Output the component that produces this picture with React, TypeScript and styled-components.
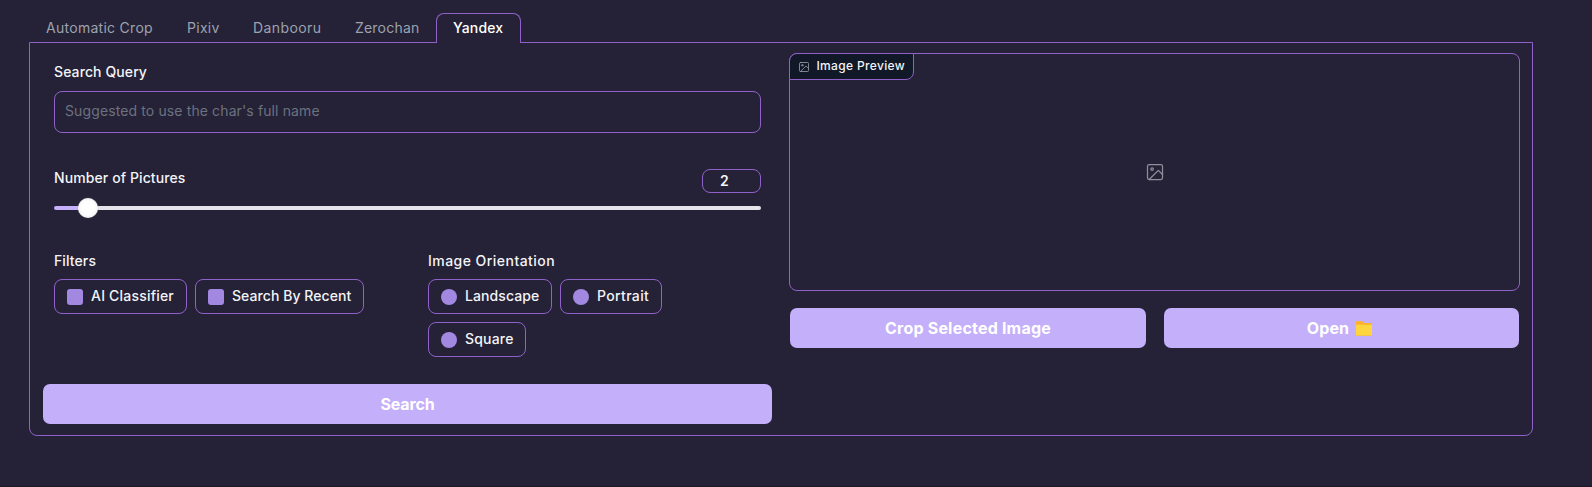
import React from "react";
import styled, { createGlobalStyle } from "styled-components";

const color = {
  bg: "#252136",
  border: "#9061c9",
  button: "#c4affa",
  mark: "#a388e2",
  text: "#f3f4f6",
  muted: "#9ca3af",
  placeholder: "#6b7280",
};

const GlobalStyle = createGlobalStyle`
  * { box-sizing: border-box; }
  body {
    margin: 0;
    background: ${color.bg};
    color: ${color.text};
    font-family: Inter, sans-serif;
    font-size: 14px;
    overflow: hidden;
  }
`;

const Page = styled.main`
  height: 487px;
  padding: 13px 59px 0 29px;
  border-bottom: 1px solid #1b1828;
`;

const TabBar = styled.nav`
  display: flex;
  height: 30px;
  margin-bottom: -1px;
  position: relative;
`;

const Tab = styled.button<{ $width: number; $track: number; $active?: boolean }>`
  width: ${(p) => p.$width}px;
  height: 30px;
  padding: 0 0 2px 16px;
  border: 1px solid ${(p) => (p.$active ? color.border : "transparent")};
  border-bottom: 0;
  border-radius: 8px 8px 0 0;
  background: ${(p) => (p.$active ? color.bg : "transparent")};
  color: ${(p) => (p.$active ? "#ffffff" : color.muted)};
  font: ${(p) => (p.$active ? 500 : 400)} 14px/26px Inter, sans-serif;
  letter-spacing: ${(p) => p.$track}px;
  text-align: left;
  white-space: nowrap;
`;

const Panel = styled.section`
  display: grid;
  grid-template-columns: 729px 731px;
  column-gap: 17px;
  height: 394px;
  padding: 10px 13px 11px;
  border: 1px solid ${color.border};
  border-radius: 0 0 8px 8px;
`;

const FormColumn = styled.div`
  display: flex;
  flex-direction: column;
  justify-content: space-between;
`;

const Fields = styled.form`
  padding: 9px 11px 0;
`;

const Label = styled.label<{ $track?: number }>`
  display: block;
  height: 20px;
  font-weight: 500;
  line-height: 20px;
  letter-spacing: ${(p) => p.$track ?? 0.1}px;
  white-space: nowrap;
`;

const TextInput = styled.input`
  display: block;
  width: 100%;
  height: 42px;
  margin-top: 9px;
  padding: 0 10px 4px;
  border: 1px solid ${color.border};
  border-radius: 8px;
  background: transparent;
  color: ${color.text};
  font: 400 14px Inter, sans-serif;
  letter-spacing: 0.12px;
  &::placeholder { color: ${color.placeholder}; opacity: 1; }
`;

const SliderHead = styled.div`
  display: flex;
  justify-content: space-between;
  margin-top: 36px;
  height: 24px;
  ${Label} { line-height: 18px; }
`;

const NumberBox = styled.output`
  width: 59px;
  height: 24px;
  padding-left: 17px;
  border: 1px solid ${color.border};
  border-radius: 8px;
  font-weight: 600;
  line-height: 22px;
`;

const Track = styled.div`
  display: flex;
  align-items: center;
  height: 4px;
  margin-top: 13px;
  border-radius: 2px;
  background: linear-gradient(to right, ${color.button} 34px, #e5e4ea 34px);
`;

const Thumb = styled.span`
  flex: none;
  width: 20px;
  height: 20px;
  margin-left: 24px;
  border-radius: 50%;
  background: radial-gradient(circle, #ffffff 45%, #e4e4e4 100%);
  box-shadow: 0 0 1px #8d8997;
`;

const Groups = styled.div`
  display: grid;
  grid-template-columns: 358px 334px;
  column-gap: 16px;
  margin-top: 41px;
`;

const Options = styled.div`
  display: flex;
  flex-wrap: wrap;
  gap: 8px;
  margin-top: 8px;
`;

const Option = styled.label<{ $width: number; $track: number }>`
  display: flex;
  align-items: center;
  gap: 8px;
  width: ${(p) => p.$width}px;
  height: 35px;
  padding: 0 0 2px 12px;
  border: 1px solid ${color.border};
  border-radius: 8px;
  font-weight: 500;
  letter-spacing: ${(p) => p.$track}px;
  white-space: nowrap;
`;

const Mark = styled.span<{ $round?: boolean }>`
  flex: none;
  width: 16px;
  height: 16px;
  margin-top: 3px;
  border-radius: ${(p) => (p.$round ? "50%" : "3px")};
  background: ${color.mark};
`;

const ActionButton = styled.button<{ $track?: number }>`
  display: flex;
  align-items: center;
  justify-content: center;
  gap: 7px;
  width: 100%;
  height: 40px;
  padding: 0;
  border: 0;
  border-radius: 7px;
  background: ${color.button};
  color: #ffffff;
  font: 700 16px/24px Inter, sans-serif;
  letter-spacing: ${(p) => p.$track ?? 0}px;
`;

const OpenButton = styled(ActionButton)`
  padding-right: 4px;
`;

const PreviewColumn = styled.div``;

const Preview = styled.figure`
  position: relative;
  display: flex;
  align-items: center;
  justify-content: center;
  height: 238px;
  margin: 0;
  border: 1px solid ${color.border};
  border-radius: 8px;
  color: #918f9a;
`;

const PreviewLabel = styled.figcaption`
  position: absolute;
  top: -1px;
  left: -1px;
  display: flex;
  align-items: center;
  gap: 7px;
  width: 125px;
  height: 27px;
  padding: 0 0 2px 8px;
  border: 1px solid ${color.border};
  border-radius: 8px 0 8px 0;
  background: #111827;
  color: ${color.text};
  font-size: 12px;
  font-weight: 500;
  letter-spacing: 0.34px;
  white-space: nowrap;
  svg { color: #a3a7af; margin: 3px 0 0 -0.5px; }
`;

const Actions = styled.div`
  display: grid;
  grid-template-columns: 356px 355px;
  column-gap: 18px;
  margin: 17px 0 0 1px;
`;

const ImageIcon = ({ size }: { size: number }) => (
  <svg width={size} height={size} viewBox="0 0 24 24" fill="none" stroke="currentColor" strokeWidth="1.5" strokeLinecap="round" strokeLinejoin="round">
    <rect x="3" y="3" width="18" height="18" rx="2" />
    <circle cx="8.5" cy="8.5" r="1.5" />
    <polyline points="21 15 16 10 5 21" />
  </svg>
);

const FolderIcon = () => (
  <svg width="16" height="16" viewBox="0 0 16 16">
    <path d="M0 2a1 1 0 0 1 1-1h5l2 2h7a1 1 0 0 1 1 1v4H0z" fill="#ffb02e" />
    <path d="M0 5.5A.7.7 0 0 1 .7 4.8h14.6a.7.7 0 0 1 .7.7V15a1 1 0 0 1-1 1H1a1 1 0 0 1-1-1z" fill="#fcd53f" />
    <path d="M0 15h16a1 1 0 0 1-1 1H1a1 1 0 0 1-1-1z" fill="#f3c34a" />
  </svg>
);

const tabs = [
  { name: "Automatic Crop", width: 141, track: 0.28 },
  { name: "Pixiv", width: 66, track: 0.3 },
  { name: "Danbooru", width: 102, track: 0.4 },
  { name: "Zerochan", width: 98, track: 0.2 },
  { name: "Yandex", width: 85, track: 0.15 },
];

const filters = [
  { name: "AI Classifier", width: 133, track: 0.2 },
  { name: "Search By Recent", width: 169, track: 0.06 },
];

const orientations = [
  { name: "Landscape", width: 124, track: 0.08 },
  { name: "Portrait", width: 102, track: 0.35 },
  { name: "Square", width: 98, track: 0.2 },
];

export default function App() {
  return (
    <Page>
      <GlobalStyle />
      <TabBar>
        {tabs.map((t) => (
          <Tab key={t.name} $width={t.width} $track={t.track} $active={t.name === "Yandex"}>
            {t.name}
          </Tab>
        ))}
      </TabBar>
      <Panel>
        <FormColumn>
          <Fields>
            <Label>Search Query</Label>
            <TextInput placeholder="Suggested to use the char's full name" />
            <SliderHead>
              <Label>Number of Pictures</Label>
              <NumberBox>2</NumberBox>
            </SliderHead>
            <Track>
              <Thumb />
            </Track>
            <Groups>
              <div>
                <Label>Filters</Label>
                <Options>
                  {filters.map((f) => (
                    <Option key={f.name} $width={f.width} $track={f.track}>
                      <Mark />
                      {f.name}
                    </Option>
                  ))}
                </Options>
              </div>
              <div>
                <Label $track={0.46}>Image Orientation</Label>
                <Options>
                  {orientations.map((o) => (
                    <Option key={o.name} $width={o.width} $track={o.track}>
                      <Mark $round />
                      {o.name}
                    </Option>
                  ))}
                </Options>
              </div>
            </Groups>
          </Fields>
          <ActionButton $track={-0.15}>Search</ActionButton>
        </FormColumn>
        <PreviewColumn>
          <Preview>
            <PreviewLabel>
              <ImageIcon size={12} />
              Image Preview
            </PreviewLabel>
            <ImageIcon size={20} />
          </Preview>
          <Actions>
            <ActionButton $track={0.2}>Crop Selected Image</ActionButton>
            <OpenButton $track={0.1}>
              Open
              <FolderIcon />
            </OpenButton>
          </Actions>
        </PreviewColumn>
      </Panel>
    </Page>
  );
}
